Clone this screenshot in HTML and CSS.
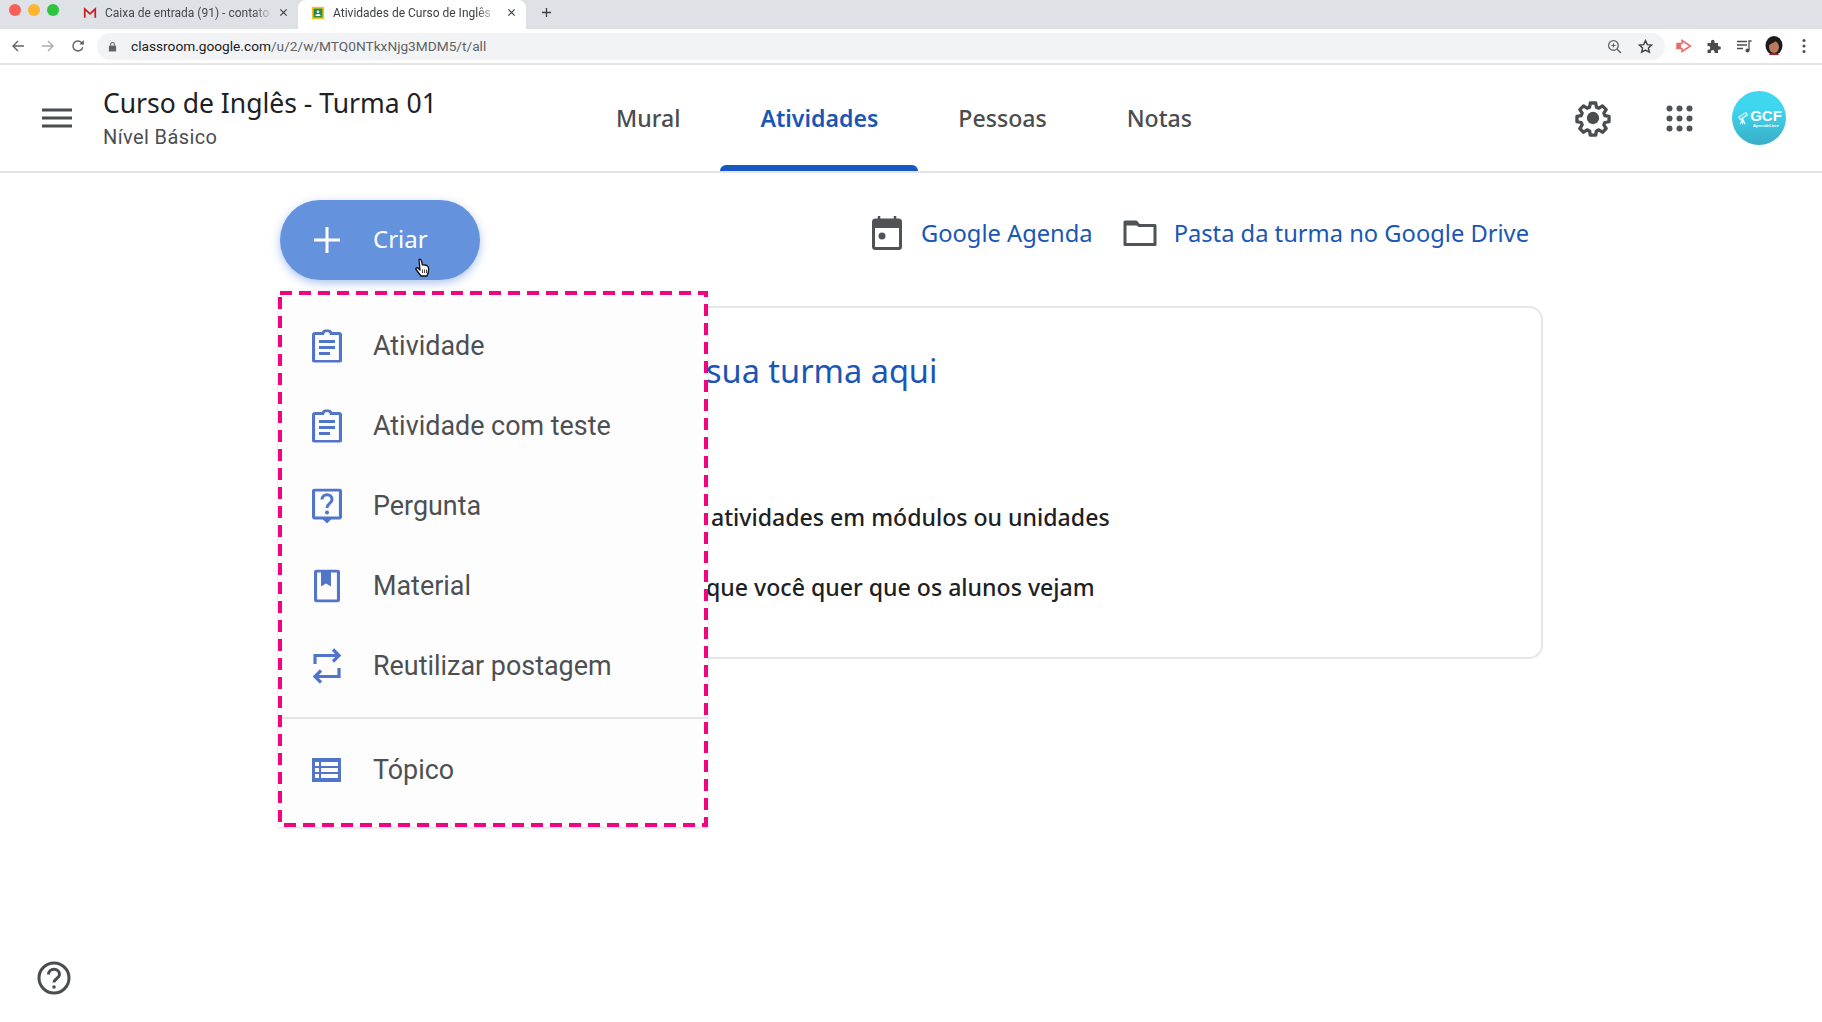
FILE: index.html
```html
<!DOCTYPE html>
<html lang="pt">
<head>
<meta charset="utf-8">
<title>Atividades de Curso de Inglês</title>
<link rel="stylesheet" href="styles.css">
</head>
<body>
<div class="tabstrip">
  <div class="lights"><span class="light red"></span><span class="light yellow"></span><span class="light green"></span></div>
  <div class="tab">
    <svg class="tab-icon" viewBox="0 0 16 16"><path d="M2 13.500V3.500L8 9l6-5.500V13.500" fill="none" stroke="#c5221f" stroke-width="2"/></svg>
    <span class="tab-title">Caixa de entrada (91) - contato</span>
    <svg class="tab-x" viewBox="0 0 10 10"><path d="M1.500 1.500l7 7M8.500 1.500l-7 7" stroke="#3c4043" stroke-width="1.300"/></svg>
  </div>
  <div class="tab active">
    <svg class="tab-icon" viewBox="0 0 16 16"><rect x="1" y="1" width="14" height="14" fill="#f9bf1e"/><rect x="3" y="3" width="10" height="10" fill="#1f8e4d"/><circle cx="8" cy="6.500" r="1.500" fill="#fff"/><path d="M5 11.500c0-3 6-3 6 0z" fill="#fff"/></svg>
    <span class="tab-title">Atividades de Curso de Inglês</span>
    <svg class="tab-x" viewBox="0 0 10 10"><path d="M1.500 1.500l7 7M8.500 1.500l-7 7" stroke="#3c4043" stroke-width="1.300"/></svg>
  </div>
  <svg class="new-tab" viewBox="0 0 12 12"><path d="M6 1v10M1 6h10" stroke="#3c4043" stroke-width="1.400"/></svg>
</div>

<div class="toolbar">
  <svg class="nav-icon" viewBox="0 0 14 14"><path d="M13 7H2M7 2L2 7l5 5" fill="none" stroke="#5f6368" stroke-width="1.400"/></svg>
  <svg class="nav-icon" viewBox="0 0 14 14"><path d="M1 7h11M7 2l5 5-5 5" fill="none" stroke="#a9acb0" stroke-width="1.400"/></svg>
  <svg class="nav-icon" viewBox="0 0 14 14"><path d="M11.800 8.200A5 5 0 1 1 10.500 3.400L12.500 5" fill="none" stroke="#5f6368" stroke-width="1.400"/><path d="M12.800 1v4.500H8.300z" fill="#5f6368"/></svg>
  <div class="omnibox">
    <svg class="lock" viewBox="0 0 10 12"><path d="M1 5h8v6.500H1z" fill="#5f6368"/><path d="M3 5V3.500a2 2 0 0 1 4 0V5" fill="none" stroke="#5f6368" stroke-width="1.200"/></svg>
    <span class="url">classroom.google.com<span class="url-path">/u/2/w/MTQ0NTkxNjg3MDM5/t/all</span></span>
    <svg class="omni-icon zoom-icon" viewBox="0 0 14 14"><circle cx="6" cy="6" r="4.500" fill="none" stroke="#5f6368" stroke-width="1.200"/><path d="M9.500 9.500L13 13" stroke="#5f6368" stroke-width="1.400"/><path d="M6 4v4M4 6h4" stroke="#5f6368" stroke-width="1"/></svg>
    <svg class="omni-icon" viewBox="0 0 14 14"><path d="M7 1.500l1.700 3.700 4 .4-3 2.700.9 4L7 10.300l-3.600 2 .9-4-3-2.700 4-.4z" fill="none" stroke="#3c4043" stroke-width="1.300"/></svg>
  </div>
  <div class="extensions">
    <svg class="ext-icon" viewBox="0 0 16 16"><path d="M1 5.500h5V2.500L14.500 8 6 13.500v-3H1z" fill="none" stroke="#ea6a6a" stroke-width="1.500"/><path d="M1 5.500h4v5H1z" fill="#ea6a6a"/></svg>
    <svg class="ext-icon" viewBox="0 0 16 16"><path d="M1.500 5H5V3.500a1.800 1.800 0 0 1 3.600 0V5H12v3.200h1.200a1.800 1.800 0 0 1 0 3.600H12V15H8.500v-1.300a1.800 1.800 0 0 0-3.600 0V15H1.500v-3.300h1a1.800 1.800 0 0 0 0-3.600h-1z" fill="#4a4d50"/></svg>
    <svg class="ext-icon" viewBox="0 0 16 16"><path d="M1 3.500h10M1 7h10M1 10.500h6" stroke="#4a4d50" stroke-width="1.300"/><circle cx="11.500" cy="12.500" r="2" fill="#4a4d50"/><path d="M13 12.500V3h2.500" fill="none" stroke="#4a4d50" stroke-width="1.300"/></svg>
    <svg class="ext-icon profile" viewBox="0 0 18 20"><ellipse cx="9" cy="9.500" rx="8.500" ry="9.500" fill="#1c1a1a"/><ellipse cx="9" cy="11" rx="5" ry="6" fill="#b97a5c"/><path d="M4 19c1-3 9-3 10 0z" fill="#a81c22"/><path d="M3.500 9c2-1 6-2 7.500-4.500L14.500 9V4.500H4z" fill="#1c1a1a"/></svg>
    <svg class="ext-icon" viewBox="0 0 16 16"><circle cx="8" cy="2.500" r="1.500" fill="#4a4d50"/><circle cx="8" cy="8" r="1.500" fill="#4a4d50"/><circle cx="8" cy="13.500" r="1.500" fill="#4a4d50"/></svg>
  </div>
</div>

<header class="app-header">
  <svg class="menu-btn" viewBox="0 0 30 20"><path d="M0 2h30M0 10h30M0 18h30" stroke="#4a4d50" stroke-width="3.200"/></svg>
  <div class="class-title">
    <div class="class-name">Curso de Inglês - Turma 01</div>
    <div class="class-level">Nível Básico</div>
  </div>
  <nav class="nav-tabs">
    <a class="nav-tab">Mural</a>
    <a class="nav-tab selected">Atividades</a>
    <a class="nav-tab">Pessoas</a>
    <a class="nav-tab">Notas</a>
  </nav>
  <div class="header-actions">
    <svg class="gear" viewBox="0 0 24 24"><path d="M10.200 2h3.600l.5 2.800 1.600.7 2.400-1.600 2.500 2.500-1.600 2.400.7 1.600 2.800.5v3.600l-2.800.5-.7 1.600 1.600 2.400-2.500 2.500-2.400-1.600-1.600.7-.5 2.800h-3.600l-.5-2.800-1.600-.7-2.400 1.600-2.500-2.500 1.600-2.400-.7-1.600-2.800-.5v-3.600l2.800-.5.7-1.600-1.600-2.400 2.500-2.500 2.400 1.600 1.600-.7z" fill="none" stroke="#4a4d50" stroke-width="2.200" stroke-linejoin="round" transform="translate(1.200 1.200) scale(.9)"/><circle cx="12" cy="12" r="3.700" fill="#4a4d50"/></svg>
    <svg class="apps" viewBox="0 0 27 27"><g fill="#4f5256"><circle cx="3.500" cy="3.500" r="3"/><circle cx="13.500" cy="3.500" r="3"/><circle cx="23.500" cy="3.500" r="3"/><circle cx="3.500" cy="13.500" r="3"/><circle cx="13.500" cy="13.500" r="3"/><circle cx="23.500" cy="13.500" r="3"/><circle cx="3.500" cy="23.500" r="3"/><circle cx="13.500" cy="23.500" r="3"/><circle cx="23.500" cy="23.500" r="3"/></g></svg>
    <div class="avatar">
      <svg class="scope" viewBox="0 0 14 18"><path d="M1 8l9-6 2 3-9 6zM6 10l-3 7M6 10l3 7M6 10v7" fill="none" stroke="#e6fafd" stroke-width="1.500"/></svg>
      <div class="avatar-text"><span class="gcf">GCF</span><span class="aprende">AprendeLivre</span></div>
    </div>
  </div>
</header>

<main class="content">
  <div class="actions">
    <button class="create-btn">
      <svg class="plus" viewBox="0 0 28 28"><path d="M14 1v26M1 14h26" stroke="#fff" stroke-width="3"/></svg>
      <span class="create-label">Criar</span>
    </button>
    <div class="links">
      <a class="link">
        <svg class="link-icon cal" viewBox="0 0 30 34"><path d="M7 0v5M23 0v5" stroke="#4f5256" stroke-width="2.500"/><rect x="1.500" y="4" width="27" height="28.500" rx="2" fill="none" stroke="#4f5256" stroke-width="3"/><rect x="1.500" y="4" width="27" height="8" fill="#4f5256"/><circle cx="10" cy="20" r="3.500" fill="#4f5256"/></svg>
        <span>Google Agenda</span>
      </a>
      <a class="link">
        <svg class="link-icon folder" viewBox="0 0 34 26"><path d="M2 2h11l3 3.500h16V24.500H2z" fill="none" stroke="#4f5256" stroke-width="3" stroke-linejoin="round"/><path d="M2 2h11l3 3.500H2z" fill="#4f5256"/></svg>
        <span>Pasta da turma no Google Drive</span>
      </a>
    </div>
  </div>

  <section class="card">
    <h2 class="card-title">sua turma aqui</h2>
    <p class="card-line first">atividades em módulos ou unidades</p>
    <p class="card-line second">que você quer que os alunos vejam</p>
  </section>

  <div class="create-menu">
    <ul class="menu-list">
      <li class="menu-item">
        <svg class="menu-icon" viewBox="0 0 30 33"><path d="M10.500 4H3a1.500 1.500 0 0 0-1.500 1.500v25A1.500 1.500 0 0 0 3 32h24a1.500 1.500 0 0 0 1.500-1.500v-25A1.500 1.500 0 0 0 27 4H19.500M10.500 5.500c0-6 9-6 9 0" fill="none" stroke="#5075c9" stroke-width="3.200"/><path d="M7 12h16M7 18h16M7 24h11" stroke="#5075c9" stroke-width="3"/></svg>
        <span>Atividade</span>
      </li>
      <li class="menu-item">
        <svg class="menu-icon" viewBox="0 0 30 33"><path d="M10.500 4H3a1.500 1.500 0 0 0-1.500 1.500v25A1.500 1.500 0 0 0 3 32h24a1.500 1.500 0 0 0 1.500-1.500v-25A1.500 1.500 0 0 0 27 4H19.500M10.500 5.500c0-6 9-6 9 0" fill="none" stroke="#5075c9" stroke-width="3.200"/><path d="M7 12h16M7 18h16M7 24h11" stroke="#5075c9" stroke-width="3"/></svg>
        <span>Atividade com teste</span>
      </li>
      <li class="menu-item">
        <svg class="menu-icon" viewBox="0 0 30 35"><path d="M3 1.500h24A1.500 1.500 0 0 1 28.500 3v25a1.500 1.500 0 0 1-1.500 1.500H3A1.500 1.500 0 0 1 1.500 28V3A1.500 1.500 0 0 1 3 1.500z" fill="none" stroke="#5075c9" stroke-width="3.200"/><path d="M9 29h12l-6 6z" fill="#5075c9"/><path d="M10 11c0-6.500 10-6.500 10 0 0 4-5 4-5 8.500" fill="none" stroke="#5075c9" stroke-width="3"/><circle cx="15" cy="24" r="2" fill="#5075c9"/></svg>
        <span>Pergunta</span>
      </li>
      <li class="menu-item">
        <svg class="menu-icon book" viewBox="0 0 26 33"><rect x="1.500" y="1.500" width="23" height="30" rx="1.500" fill="none" stroke="#5075c9" stroke-width="3.200"/><path d="M7 2h10v15l-5-3-5 3z" fill="#5075c9"/></svg>
        <span>Material</span>
      </li>
      <li class="menu-item">
        <svg class="menu-icon" viewBox="0 0 30 36"><path d="M3 16V7.500h24M21 1.500l6 6-6 6M27 20v8.500H3M9 22.500l-6 6 6 6" fill="none" stroke="#5075c9" stroke-width="3.200"/></svg>
        <span>Reutilizar postagem</span>
      </li>
    </ul>
    <div class="menu-divider"></div>
    <ul class="menu-list">
      <li class="menu-item">
        <svg class="menu-icon" viewBox="0 0 30 24"><path fill-rule="evenodd" d="M0 0h29v24H0zM7 4H3v4h4zM26 4H9v4h17zM7 10H3v4h4zM26 10H9v4h17zM7 16H3v4h4zM26 16H9v4h17z" fill="#5075c9"/></svg>
        <span>Tópico</span>
      </li>
    </ul>
    <svg class="dash-frame" width="430" height="536" viewBox="0 0 430 536"><path d="M2 2H428V534H2z" fill="none" stroke="#f0047f" stroke-width="4" stroke-dasharray="12 7"/></svg>
  </div>

  <svg class="pointer" viewBox="0 0 16 20"><path d="M5 1.500c1-.8 2 0 2.300 1L8.500 7c1-.5 4.500 0 5.500 1.500 1 2 .5 6-1 9.500H7L2 11.500c-.8-1.500 1-2.500 2.500-1L6 12z" fill="#fff" stroke="#111" stroke-width="1.300" stroke-linejoin="round"/><path d="M8.500 11.500v3.500M10.500 11.500v3.500M12.500 11.500v3.500" stroke="#333" stroke-width=".9"/></svg>
</main>

<svg class="help" viewBox="0 0 34 34"><circle cx="17" cy="17" r="15" fill="none" stroke="#4a4d50" stroke-width="3"/><path d="M11.500 13.500c0-7 11-7 11 0 0 4-5.500 4-5.500 8" fill="none" stroke="#4a4d50" stroke-width="3"/><circle cx="17" cy="26" r="1.800" fill="#4a4d50"/></svg>
</body>
</html>
```

FILE: styles.css
```css
* { box-sizing: border-box; }
html, body { margin: 0; padding: 0; height: 1022px; overflow: hidden; background: #fff; }
body { font-family: Roboto, "Liberation Sans", sans-serif; color: #202124; }
ul { list-style: none; margin: 0; padding: 0; }
svg { display: block; flex: none; }

.tabstrip { height: 29px; background: #dee1e6; display: flex; align-items: stretch; }
.lights { width: 80px; display: flex; gap: 7px; padding: 4px 0 0 9px; }
.light { width: 12px; height: 12px; border-radius: 50%; }
.light.red { background: #f95f57; }
.light.yellow { background: #fbb52f; }
.light.green { background: #2fc43f; }
.tab { width: 218px; display: flex; align-items: center; padding: 0 0 4px 3px; font-size: 12px; color: #45484c; }
.tab.active { width: 228px; background: #fff; border-radius: 8px 8px 0 0; padding-left: 13px; color: #3c4043; }
.tab-icon { width: 14px; height: 14px; }
.tab-title { margin-left: 8px; width: 168px; white-space: nowrap; overflow: hidden; -webkit-mask-image: linear-gradient(90deg, #000 88%, transparent); mask-image: linear-gradient(90deg, #000 88%, transparent); }
.tab.active .tab-title { margin-left: 8px; width: 164px; }
.tab-x { width: 9px; height: 9px; margin-left: 6px; }
.tab.active .tab-x { margin-left: 10px; }
.new-tab { width: 11px; height: 11px; margin: 7px 0 0 15px; }

.toolbar { height: 36px; display: flex; align-items: center; padding: 0 0 0 11px; background: #fff; border-bottom: 2px solid #e6e6e8; }
.nav-icon { width: 14px; height: 14px; margin-right: 16px; }
.omnibox { width: 1568px; height: 27px; border-radius: 14px; background: #f1f3f4; display: flex; align-items: center; padding: 0 12px 0 11px; }
.toolbar .nav-icon:nth-child(3) { margin-right: 12px; }
.lock { width: 9px; height: 11px; }
.url { margin-left: 14px; font-size: 13.700px; color: #202124; white-space: nowrap; }
.url-path { color: #5f6368; }
.omni-icon { width: 15px; height: 15px; }
.zoom-icon { margin-left: auto; margin-right: 16px; }
.extensions { display: flex; align-items: center; gap: 14px; margin-left: 11px; }
.ext-icon { width: 16px; height: 16px; }
.ext-icon.profile { width: 18px; height: 20px; margin: 0 -1px; }

.app-header { height: 108px; display: flex; align-items: stretch; border-bottom: 2px solid #e3e4e6; padding-right: 36px; }
.menu-btn { width: 30px; height: 20px; margin: 43px 0 0 42px; }
.class-title { width: 473px; margin-left: 31px; padding-top: 19px; }
.class-name { font-family: "Noto Sans", sans-serif; font-size: 26.500px; line-height: 38px; color: #202124; }
.class-level { font-family: Roboto, sans-serif; font-size: 20px; line-height: 26px; margin-top: 2px; color: #4b4e52; letter-spacing: .4px; }
.nav-tabs { display: flex; }
.nav-tab { padding: 0 40px; display: flex; align-items: center; font-family: "Noto Sans", sans-serif; font-size: 23.100px; font-weight: 500; color: #4a4d50; height: 106px; position: relative; }
.nav-tab.selected { color: #1a56b5; font-weight: 600; }
.nav-tab.selected::after { content: ""; position: absolute; left: 0; right: 0; bottom: 0; height: 6px; background: #1657c4; border-radius: 6px 6px 0 0; }
.header-actions { margin-left: auto; display: flex; align-items: center; height: 106px; }
.gear { width: 40px; height: 40px; }
.apps { width: 27px; height: 27px; margin-left: 53px; }
.avatar { width: 54px; height: 54px; margin-left: 39px; border-radius: 50%; background: linear-gradient(180deg, #3ed7ef 30%, #3aaec6); color: #fff; display: flex; align-items: center; justify-content: center; gap: 1px; padding-left: 2px; }
.scope { width: 11px; height: 16px; }
.avatar-text { display: flex; flex-direction: column; align-items: center; }
.gcf { font-family: "Liberation Sans", sans-serif; font-size: 15px; line-height: 15px; font-weight: 700; }
.aprende { font-family: "Liberation Sans", sans-serif; font-size: 4px; line-height: 5px; font-weight: 700; }

.content { position: relative; height: 849px; padding: 27px 279px 0 280px; }
.actions { display: flex; justify-content: space-between; align-items: flex-start; height: 80px; }
.create-btn { width: 200px; height: 80px; border: 0; border-radius: 40px; background: #6592dd; color: #fff; display: flex; align-items: center; padding: 0 0 0 33px; font-family: "Noto Sans", sans-serif; font-size: 24px; box-shadow: 0 3px 10px rgba(70, 120, 220, .45); }
.plus { width: 28px; height: 28px; margin-right: 32px; }
.create-label { padding-bottom: 4px; }
.links { display: flex; align-items: center; height: 66px; gap: 30px; padding-right: 14px; font-family: "Noto Sans", sans-serif; font-size: 23.700px; color: #1a56b5; }
.link { display: flex; align-items: center; }
.link-icon { margin-right: 19px; }
.link-icon.cal { width: 30px; height: 34px; }
.link-icon.folder { width: 34px; height: 26px; margin-right: 17px; }

.card { margin-top: 26px; height: 353px; border: 2px solid #e6e7e9; border-radius: 14px; padding: 33px 0 0 424px; background: #fff; }
.card-title { margin: 0; font-family: "Noto Sans", sans-serif; font-weight: 400; font-size: 32.500px; line-height: 60px; color: #1a56b5; }
.card-line { margin: 0; font-family: "Noto Sans", sans-serif; font-weight: 500; font-size: 23.100px; line-height: 30px; color: #202124; white-space: nowrap; }
.card-line.first { margin-top: 101px; padding-left: 5px; }
.card-line.second { margin-top: 40px; }

.create-menu { position: absolute; left: 278px; top: 118px; width: 430px; height: 536px; background: #fdfdfd; padding-top: 15px; box-shadow: 0 1px 3px rgba(60, 64, 67, .2); }
.menu-item { height: 80px; display: flex; align-items: center; position: relative; padding-left: 95px; font-size: 26.900px; color: #4d5053; }
.menu-icon { position: absolute; left: 34px; top: 50%; transform: translateY(-50%); width: 30px; height: auto; }
.menu-icon.book { width: 26px; left: 36px; }
.menu-divider { height: 2px; margin: 11px 0; background: #e3e4e6; }
.dash-frame { position: absolute; left: 0; top: 0; }
.pointer { position: absolute; left: 414px; top: 85px; width: 16px; height: 20px; }
.help { position: fixed; left: 37px; top: 961px; width: 34px; height: 34px; }
```
